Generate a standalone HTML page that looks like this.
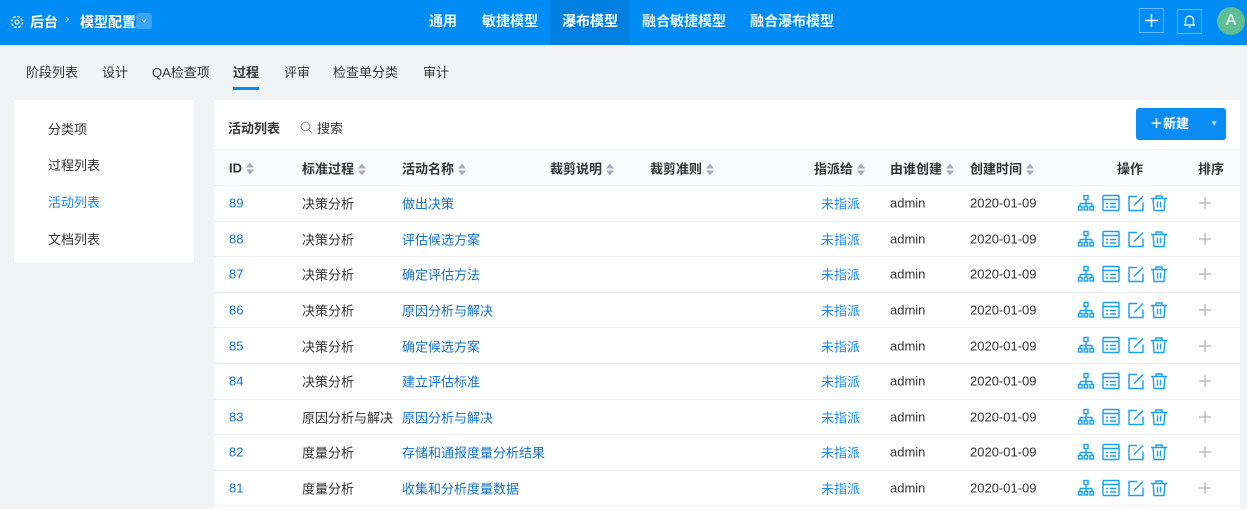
<!DOCTYPE html>
<html><head><meta charset="utf-8"><style>
*{margin:0;padding:0;box-sizing:border-box}
body{width:1247px;height:509px;overflow:hidden;background:#f2f3f5;font-family:"Liberation Sans","Noto Sans CJK SC",sans-serif;font-size:13px;color:#333;position:relative}
.a{position:absolute;white-space:nowrap}
.hd{position:absolute;left:0;top:0;width:1247px;height:45px;background:#008cf5;color:#fff}
.hd .n{position:absolute;top:0;height:45px;line-height:43px;font-size:14px;font-weight:bold;color:#eaf5ff}
.sub{font-size:13px;color:#333;top:62px}
.side{position:absolute;left:14px;top:100px;width:180px;height:163px;background:#fff}
.side div{position:absolute;left:34px;font-size:13px;color:#333}
.panel{position:absolute;left:214px;top:100px;width:1026px;height:409px;background:#fff}
.row{position:absolute;left:0;width:1026px;border-bottom:1px solid #eef0f2}
.row span{position:absolute;top:50%;transform:translateY(-50%);white-space:nowrap}
.th span{font-weight:bold;color:#333}
.so{display:inline-block;vertical-align:middle;margin-left:4px;width:8px;height:12px;position:relative}
.so:before{content:"";position:absolute;left:0;top:0;border:4px solid transparent;border-bottom:5px solid #aab;border-top:0}
.so:after{content:"";position:absolute;left:0;top:7px;border:4px solid transparent;border-top:5px solid #aab;border-bottom:0}
.lk{color:#1573c4}
.bl{color:#1a8cf0}
</style></head><body>
<div class="hd">
 <svg class="a" style="left:10px;top:15px" width="14" height="14" viewBox="0 0 14 14"><circle cx="7" cy="7" r="2" fill="none" stroke="#fff" stroke-width="1.2"/><circle cx="7" cy="7" r="5.5" fill="none" stroke="#fff" stroke-width="1.2" stroke-dasharray="3 1.3"/></svg>
 <div class="a" style="left:30px;top:12px;font-size:14px;font-weight:bold">后台</div>
 <div class="a" style="left:65px;top:11px;font-size:13px;color:#cde">›</div>
 <div class="a" style="left:80px;top:12px;font-size:14px;font-weight:bold">模型配置</div>
 <div class="a" style="left:136px;top:13px;width:16px;height:16px;background:#3aa3f7;border-radius:2px;text-align:center;line-height:14px;font-size:10px">⌄</div>
 <div class="n" style="left:429px">通用</div>
 <div class="n" style="left:482px">敏捷模型</div>
 <div class="n" style="left:550px;width:80px;background:#0280e0;text-align:center;color:#fff">瀑布模型</div>
 <div class="n" style="left:642px">融合敏捷模型</div>
 <div class="n" style="left:750px">融合瀑布模型</div>
 <div class="a" style="left:1139px;top:8px;width:25px;height:25px;border:1px solid #6bb9f8"><svg width="23" height="23" viewBox="0 0 23 23"><path d="M11.5 5v13M5 11.5h13" stroke="#fff" stroke-width="1.5"/></svg></div>
 <div class="a" style="left:1177px;top:9px;width:25px;height:25px;border:1px solid #6bb9f8"><svg width="23" height="23" viewBox="0 0 23 23"><path d="M7.5 15V10a4 4 0 0 1 8 0v5h1.5H6z M10.5 17h2" fill="none" stroke="#fff" stroke-width="1.3"/></svg></div>
 <div class="a" style="left:1217px;top:7px;width:28px;height:28px;border-radius:50%;background:#5dbe96;text-align:center;line-height:28px;font-size:16px">A</div>
</div>
<div class="a sub" style="left:26px">阶段列表</div>
<div class="a sub" style="left:102px">设计</div>
<div class="a sub" style="left:152px">QA检查项</div>
<div class="a sub" style="left:233px;font-weight:bold">过程</div>
<div class="a" style="left:233px;top:87px;width:26px;height:3px;background:#0a8cf0"></div>
<div class="a sub" style="left:284px">评审</div>
<div class="a sub" style="left:333px">检查单分类</div>
<div class="a sub" style="left:423px">审计</div>
<div class="side">
 <div style="top:19px">分类项</div>
 <div style="top:55px">过程列表</div>
 <div style="top:92px;color:#1a8cf0">活动列表</div>
 <div style="top:129px">文档列表</div>
</div>
<div class="panel">
 <div class="a" style="left:14px;top:18px;font-weight:bold">活动列表</div>
 <svg class="a" style="left:86px;top:21px" width="13" height="13" viewBox="0 0 13 13"><circle cx="5.5" cy="5.5" r="4.3" fill="none" stroke="#888" stroke-width="1.1"/><path d="M8.7 8.7L12 12" stroke="#888" stroke-width="1.1"/></svg>
 <div class="a" style="left:103px;top:18px">搜索</div>
 <div class="a" style="left:922px;top:8px;width:90px;height:32px;background:#0a8cf5;border-radius:3px;color:#fff;font-weight:bold;line-height:32px;padding-left:14px">＋新建<span style="position:absolute;right:8px;top:0;font-size:8px;color:#b5dbff">▼</span></div>
 <div class="row th" style="top:49px;height:37px;background:#fafbfc;border-top:1px solid #eef0f2">
  <span style="left:15px">ID<i class="so"></i></span><span style="left:88px">标准过程<i class="so"></i></span><span style="left:188px">活动名称<i class="so"></i></span><span style="left:336px">裁剪说明<i class="so"></i></span><span style="left:436px">裁剪准则<i class="so"></i></span><span style="left:600px">指派给<i class="so"></i></span><span style="left:676px">由谁创建<i class="so"></i></span><span style="left:756px">创建时间<i class="so"></i></span><span style="left:903px">操作</span><span style="left:984px">排序</span>
 </div>
</div>
<div id="rows"></div>
<script>
var d=[["89","决策分析","做出决策"],["88","决策分析","评估候选方案"],["87","决策分析","确定评估方法"],["86","决策分析","原因分析与解决"],["85","决策分析","确定候选方案"],["84","决策分析","建立评估标准"],["83","原因分析与解决","原因分析与解决"],["82","度量分析","存储和通报度量分析结果"],["81","度量分析","收集和分析度量数据"]];
var ic='<svg width="90" height="20" viewBox="0 0 90 20" fill="none" stroke="#1aa0f0" stroke-width="1.4"><rect x="7" y="2" width="4" height="4"/><path d="M9 6v4M3 10h12M3 10v3M9 10v3M15 10v3"/><rect x="1.5" y="13" width="3.5" height="3.5"/><rect x="7.2" y="13" width="3.5" height="3.5"/><rect x="13" y="13" width="3.5" height="3.5"/><rect x="26" y="2" width="16" height="15" rx="1"/><path d="M26 6h16M29 10h2M33 10h6M29 13.5h2M33 13.5h6"/><path d="M60 3h-8v14h14v-8M57 12l9-9"/><path d="M74 5h16M79 5V2.5h6V5M76 5l1 12h10l1-12M80.5 8v6M83.5 8v6"/></svg>';
var mv='<svg width="14" height="14" viewBox="0 0 14 14"><path d="M7 1v12M1 7h12" stroke="#b0b0b0" stroke-width="1.2"/></svg>';
var h='';
d.forEach(function(r,i){var t=186+i*35.6;
h+='<div class="row" style="left:214px;top:'+t+'px;height:35.6px"><span class="lk" style="left:15px">'+r[0]+'</span><span style="left:88px">'+r[1]+'</span><span class="lk" style="left:188px">'+r[2]+'</span><span class="bl" style="left:607px">未指派</span><span style="left:676px">admin</span><span style="left:756px">2020-01-09</span><span style="left:863px;top:55%">'+ic+'</span><span style="left:984px;top:50%;line-height:0">'+mv+'</span></div>';});
document.getElementById('rows').innerHTML=h;
</script>
</body></html>
